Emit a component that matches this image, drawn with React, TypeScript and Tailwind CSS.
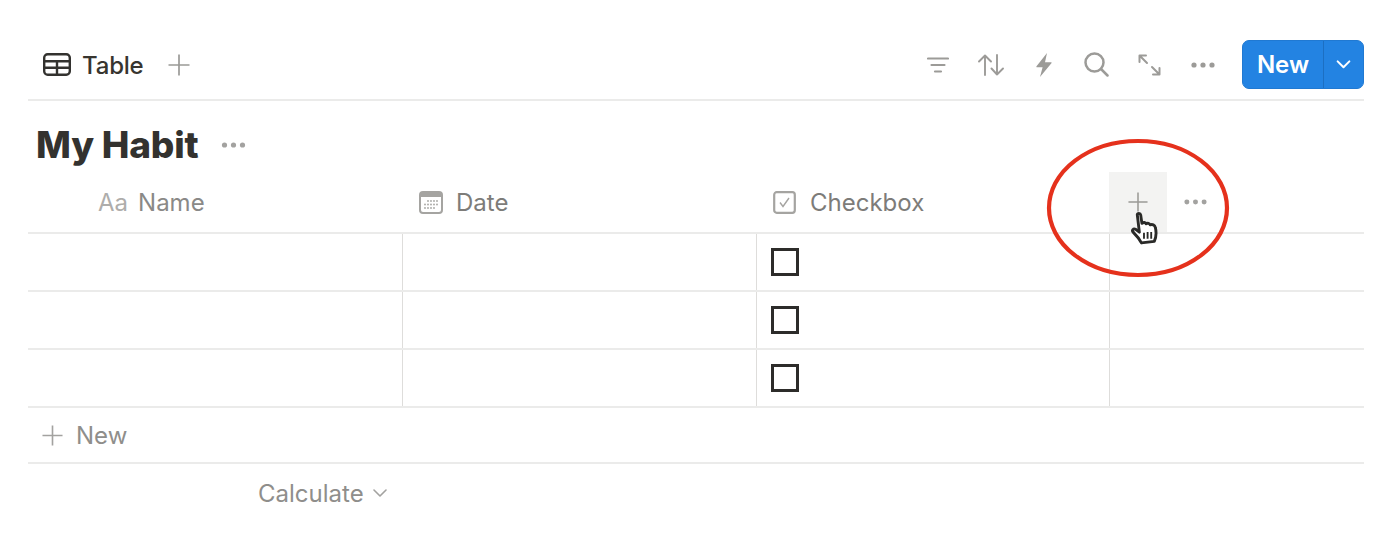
function Plus({ className }: { className: string }) {
  return (
    <svg viewBox="0 0 22 22" className={className} fill="none" stroke="currentColor" strokeWidth="1.7">
      <path d="M0.5 11H21.5M11 0.5V21.5" />
    </svg>
  )
}

function Dots({ className }: { className: string }) {
  return (
    <svg viewBox="0 0 24 6" className={className} fill="currentColor">
      <circle cx="3" cy="3" r="2.6" />
      <circle cx="12" cy="3" r="2.6" />
      <circle cx="21" cy="3" r="2.6" />
    </svg>
  )
}

function TableIcon() {
  return (
    <svg viewBox="0 0 28 23" className="w-[28px] h-[23px] text-[#33322f]" fill="none" stroke="currentColor" strokeWidth="2.4">
      <rect x="1.2" y="1.2" width="25.6" height="20.6" rx="3.5" />
      <path d="M1.2 8.2H26.8M1.2 14.8H26.8M14 8.2V21.8" />
    </svg>
  )
}

function CalendarIcon() {
  return (
    <svg viewBox="0 0 24 23" className="w-[24px] h-[23px] text-[#a5a4a1]" fill="none">
      <rect x="1" y="1" width="22" height="21" rx="3" stroke="currentColor" strokeWidth="2" />
      <path d="M1 6V4a3 3 0 0 1 3-3h16a3 3 0 0 1 3 3v2z" fill="currentColor" />
      <g fill="currentColor">
        <circle cx="9" cy="10" r="0.9" />
        <circle cx="12" cy="10" r="0.9" />
        <circle cx="15" cy="10" r="0.9" />
        <circle cx="18" cy="10" r="0.9" />
        <circle cx="6" cy="13.5" r="0.9" />
        <circle cx="9" cy="13.5" r="0.9" />
        <circle cx="12" cy="13.5" r="0.9" />
        <circle cx="15" cy="13.5" r="0.9" />
        <circle cx="18" cy="13.5" r="0.9" />
        <circle cx="6" cy="17" r="0.9" />
        <circle cx="9" cy="17" r="0.9" />
        <circle cx="12" cy="17" r="0.9" />
        <circle cx="15" cy="17" r="0.9" />
      </g>
    </svg>
  )
}

const toolIcons = [
  <svg key="filter" viewBox="0 0 22 16" className="w-[22px] h-[16px]" fill="none" stroke="currentColor" strokeWidth="2.2" strokeLinecap="round">
    <path d="M1 1.5H21M4.5 8H17.5M8 14.5H14" />
  </svg>,
  <svg key="sort" viewBox="0 0 26 22" className="w-[26px] h-[22px]" fill="none" stroke="currentColor" strokeWidth="1.9" strokeLinecap="round" strokeLinejoin="round">
    <path d="M7 21V1.5M1 7.5L7 1.5L13 7.5M19 1V20.5M13.5 14.5L19 20.5L25 14.5" />
  </svg>,
  <svg key="bolt" viewBox="0 0 16 24" className="w-[16px] h-[24px]" fill="currentColor">
    <path d="M11 0L0.5 13.2C0.2 13.7 0.4 14.2 1 14.2H6.6L4 24L15.4 10.2C15.8 9.7 15.5 9.2 15 9.2H9L11 0Z" />
  </svg>,
  <svg key="search" viewBox="0 0 25 25" className="w-[25px] h-[25px]" fill="none" stroke="currentColor" strokeWidth="2.5" strokeLinecap="round">
    <circle cx="10.5" cy="10.5" r="9" />
    <path d="M17 17L23.5 23.5" />
  </svg>,
  <svg key="expand" viewBox="0 0 23 22" className="w-[23px] h-[22px]" fill="none" stroke="currentColor" strokeWidth="2" strokeLinecap="round" strokeLinejoin="round">
    <path d="M1.5 8V1.5H8M2 2L9 9M14 13L21 20M21.5 14V20.5H15" />
  </svg>,
  <Dots key="dots" className="w-[24px] h-[6px]" />,
]

function HandCursor() {
  return (
    <svg viewBox="0 0 28 32" className="absolute left-[1130px] top-[212px] w-[29px] h-[33px]" strokeLinejoin="round">
      <path
        d="M7 2.5C7 1 10 1 10.3 2.8L11.5 11C13 9.8 15 10 15.5 11.5C17 10.4 19 10.8 19.5 12.5C21.5 11.6 24 12.5 24.5 15C25.5 19 25.5 24 23.5 28.5L11 30C9.5 27 6.5 23 3 19.5C1.5 18 3 15.5 5.5 16.8L9 19.5L7 2.5Z"
        fill="white"
        stroke="#2a2a28"
        strokeWidth="2.8"
      />
      <path d="M13.5 20V26M17 19.5V26M20.5 19.5V26" stroke="#2a2a28" strokeWidth="1.8" fill="none" />
    </svg>
  )
}

function CheckboxCell() {
  return (
    <div className="h-[56px] flex items-center pl-[14px] border-l border-[#dedddb]">
      <div className="w-[28px] h-[28px] border-[3px] border-[#2d2c2a]" />
    </div>
  )
}

export default function App() {
  const rows = [0, 1, 2]

  return (
    <div className="relative w-[1400px] h-[557px] overflow-hidden bg-white px-[28px] pr-[36px] pt-[40px] font-['Inter',sans-serif] text-[24px] leading-[30px]">
      <div className="flex items-center justify-between h-[49px]">
        <div className="flex items-center pl-[15px]">
          <TableIcon />
          <span className="ml-[11px] pt-[3px] text-[#37352f] font-medium tracking-[-0.2px]">Table</span>
          <Plus className="ml-[24px] w-[22px] h-[22px] text-[#9b9a97]" />
        </div>
        <div className="flex items-center">
          <div className="flex items-center text-[#9c9b98] mr-[13px]">
            {toolIcons.map((icon) => (
              <div key={icon.key} className="w-[53px] flex justify-center">
                {icon}
              </div>
            ))}
          </div>
          <div className="flex h-[49px] w-[122px] rounded-[7px] bg-[#2383e2] text-white border border-[#2079d2]">
            <div className="w-[80px] flex items-center justify-center font-semibold">New</div>
            <div className="flex-1 flex items-center justify-center border-l border-[#1c6fc2]">
              <svg viewBox="0 0 16 10" className="w-[15px] h-[9px]" fill="none" stroke="currentColor" strokeWidth="2.2" strokeLinecap="round" strokeLinejoin="round">
                <path d="M1.5 1.5L8 8L14.5 1.5" />
              </svg>
            </div>
          </div>
        </div>
      </div>

      <div className="mt-[10px] h-[2px] bg-[#ebebea]" />

      <div className="h-[71px] flex items-center pl-[8px] pt-[16px]">
        <h1 className="text-[37px] leading-[44px] font-extrabold tracking-[-0.2px] text-[#33322f]">My Habit</h1>
        <Dots className="ml-[23px] w-[25px] h-[6px] text-[#a3a2a0]" />
      </div>

      <div className="grid grid-cols-[374px_354px_353px_255px] h-[60px] text-[#8a8987]">
        <div className="flex items-center pl-[70px]">
          <span className="pt-[1px] text-[#aeadab] text-[24px]">Aa</span>
          <span className="ml-[10px] pt-[1px]">Name</span>
        </div>
        <div className="flex items-center pl-[17px] text-[#7d7c79]">
          <CalendarIcon />
          <span className="ml-[13px] pt-[1px]">Date</span>
        </div>
        <div className="flex items-center pl-[17px] text-[#7d7c79]">
          <svg viewBox="0 0 23 23" className="w-[23px] h-[23px] text-[#a5a4a1]" fill="none" stroke="currentColor">
            <rect x="1.2" y="1.2" width="20.6" height="20.6" rx="2.5" strokeWidth="2.2" />
            <path d="M7 11.5L10 15.5L16 7" strokeWidth="1.4" />
          </svg>
          <span className="ml-[14px] pt-[1px]">Checkbox</span>
        </div>
        <div className="flex items-stretch">
          <div className="w-[58px] bg-[#f3f3f2] flex items-center justify-center">
            <Plus className="w-[20px] h-[20px] text-[#9b9a97]" />
          </div>
          <div className="flex items-center pl-[17px]">
            <Dots className="w-[23px] h-[6px] text-[#a3a2a0]" />
          </div>
        </div>
      </div>

      {rows.map((row) => (
        <div key={row} className="grid grid-cols-[374px_354px_353px_255px] border-t-2 border-[#ebebea]">
          <div className="h-[56px]" />
          <div className="h-[56px] border-l border-[#dedddb]" />
          <CheckboxCell />
          <div className="h-[56px] border-l border-[#dedddb]" />
        </div>
      ))}

      <div className="h-[58px] flex items-center pl-[14px] border-y-2 border-[#ebebea] text-[#8f8e8b]">
        <Plus className="w-[21px] h-[21px] text-[#a3a2a0]" />
        <span className="ml-[13px] pt-[1px]">New</span>
      </div>

      <div className="h-[58px] flex items-center pl-[230px] text-[#8f8e8b]">
        <span className="pt-[1px]">Calculate</span>
        <svg viewBox="0 0 14 8" className="ml-[9px] w-[14px] h-[8px] text-[#a3a2a0]" fill="none" stroke="currentColor" strokeWidth="1.6" strokeLinecap="round" strokeLinejoin="round">
          <path d="M1 1L7 7L13 1" />
        </svg>
      </div>

      <svg viewBox="0 0 184 142" className="absolute left-[1046px] top-[137px] w-[184px] h-[142px]" fill="none">
        <ellipse cx="92" cy="71" rx="89" ry="67" stroke="#e5311c" strokeWidth="4.2" />
      </svg>
      <HandCursor />
    </div>
  )
}
